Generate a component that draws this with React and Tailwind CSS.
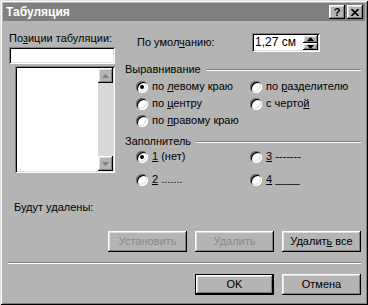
import React from 'react';

const raised =
  'shadow-[inset_-1px_-1px_0_#000,inset_1px_1px_0_#fff,inset_-2px_-2px_0_#808080,inset_2px_2px_0_#dfdfdf]';
const sunken =
  'shadow-[inset_1px_1px_0_#808080,inset_-1px_-1px_0_#fff,inset_2px_2px_0_#000,inset_-2px_-2px_0_#dfdfdf]';

const Radio = ({ checked, children }) => (
  <div className="flex items-center h-[17px]">
    <span className="relative w-3 h-3 shrink-0 rounded-full bg-white shadow-[inset_1px_1px_0_#808080,inset_-1px_-1px_0_#fff,inset_2px_2px_0_#000,inset_-2px_-2px_0_#dfdfdf]">
      {checked && <span className="absolute left-1 top-1 w-1 h-1 rounded-full bg-black" />}
    </span>
    <span className="ml-[4px] whitespace-nowrap">{children}</span>
  </div>
);

const GroupHeader = ({ children }) => (
  <div className="flex items-center h-[13px]">
    <span className="whitespace-nowrap">{children}</span>
    <span className="flex-1 ml-[5px] mr-[4px] h-[2px] border-t border-t-[#808080] border-b border-b-white" />
  </div>
);

const Button = ({ children, disabled, isDefault }) => (
  <div className={`w-[79px] h-[21px] ${isDefault ? 'border border-black' : ''}`}>
    <div
      className={`h-full flex items-center justify-center ${raised} ${
        disabled ? 'text-[#888888]' : 'text-black'
      }`}
    >
      <span className="whitespace-nowrap">{children}</span>
    </div>
  </div>
);

const Arrow = ({ up, disabled }) => (
  <svg width="7" height="4" viewBox="0 0 7 4">
    <path
      d={up ? 'M3.5 0 L7 4 L0 4 Z' : 'M0 0 L7 0 L3.5 4 Z'}
      fill={disabled ? '#808080' : '#000'}
    />
  </svg>
);

export default function App() {
  return (
    <div className="w-[368px] h-[305px] bg-[#b4b4b4] p-[3px] flex flex-col text-[11px] leading-[13px] text-black font-['Liberation_Sans',Arial,sans-serif] shadow-[inset_1px_1px_0_#dfdfdf,inset_-1px_-1px_0_#000,inset_2px_2px_0_#fff,inset_-2px_-2px_0_#808080]">
      {/* Title bar */}
      <div className="h-[18px] bg-[#808080] flex items-center pl-[3px] pr-[2px]">
        <span className="text-white font-bold text-[12px]">Табуляция</span>
        <div className="ml-auto flex gap-[2px]">
          <div className={`w-4 h-[14px] bg-[#b4b4b4] flex items-center justify-center font-bold text-[11px] ${raised}`}>?</div>
          <div className={`w-4 h-[14px] bg-[#b4b4b4] flex items-center justify-center ${raised}`}>
            <svg width="8" height="7" viewBox="0 0 8 7">
              <path d="M0.5 0 L7.5 7 M7.5 0 L0.5 7" stroke="#000" strokeWidth="1.6" />
            </svg>
          </div>
        </div>
      </div>

      {/* Main */}
      <div className="flex">
        {/* Left column */}
        <div className="w-[106px] ml-[6px] mt-[11px] flex flex-col">
          <div>
            По<u>з</u>иции табуляции:
          </div>
          <div className={`mt-[2px] h-[17px] bg-white ${sunken}`} />
          <div className={`ml-[6px] mt-[2px] h-[107px] bg-white p-[2px] flex ${sunken}`}>
            <div className="flex-1" />
            <div className="w-[15px] bg-[#d8d8d8] flex flex-col justify-between">
              <div className={`h-[15px] bg-[#b4b4b4] flex items-center justify-center ${raised}`}>
                <Arrow up disabled />
              </div>
              <div className={`h-[15px] bg-[#b4b4b4] flex items-center justify-center ${raised}`}>
                <Arrow disabled />
              </div>
            </div>
          </div>
        </div>

        {/* Right column */}
        <div className="flex-1 ml-[10px] mt-[12px] flex flex-col">
          <div className="flex items-center h-[19px] pl-[12px]">
            <span className="w-[115px]">
              По умол<u>ч</u>анию:
            </span>
            <div className={`w-[68px] h-[19px] bg-white flex p-[2px] ${sunken}`}>
              <span className="flex-1 pl-[1px] text-[12px] leading-[15px]">1,27 см</span>
              <div className="w-[15px] flex flex-col">
                <div className={`h-[8px] bg-[#b4b4b4] flex items-center justify-center ${raised}`}>
                  <Arrow up />
                </div>
                <div className={`h-[7px] bg-[#b4b4b4] flex items-center justify-center ${raised}`}>
                  <Arrow />
                </div>
              </div>
            </div>
          </div>

          <div className="mt-[11px]">
            <GroupHeader>Выравнивание</GroupHeader>
          </div>
          <div className="mt-[2px] pl-[11px] grid grid-cols-[114px_1fr]">
            <Radio checked>
              по <u>л</u>евому краю
            </Radio>
            <Radio>
              по <u>р</u>азделителю
            </Radio>
            <Radio>
              по <u>ц</u>ентру
            </Radio>
            <Radio>
              с черто<u>й</u>
            </Radio>
            <Radio>
              по <u>п</u>равому краю
            </Radio>
          </div>

          <div className="mt-[6px]">
            <GroupHeader>Заполнитель</GroupHeader>
          </div>
          <div className="pl-[11px] grid grid-cols-[114px_1fr] gap-y-[6px]">
            <Radio checked>
              <u>1</u> (нет)
            </Radio>
            <Radio>
              <u>3</u> -------
            </Radio>
            <Radio>
              <u>2</u> .......
            </Radio>
            <Radio>
              <u>4</u> ____
            </Radio>
          </div>
        </div>
      </div>

      <div className="mt-[13px] ml-[11px]">Будут удалены:</div>

      <div className="mt-[17px] flex justify-end gap-[8px] pr-[4px]">
        <Button disabled>Установить</Button>
        <Button disabled>Удалить</Button>
        <Button>
          Удалит<u>ь</u> все
        </Button>
      </div>

      <div className="mt-[10px] ml-[5px] mr-[4px] h-[2px] border-t border-t-[#808080] border-b border-b-white" />

      <div className="mt-[10px] flex justify-end gap-[8px] pr-[4px]">
        <Button isDefault>OK</Button>
        <Button>Отмена</Button>
      </div>
    </div>
  );
}
